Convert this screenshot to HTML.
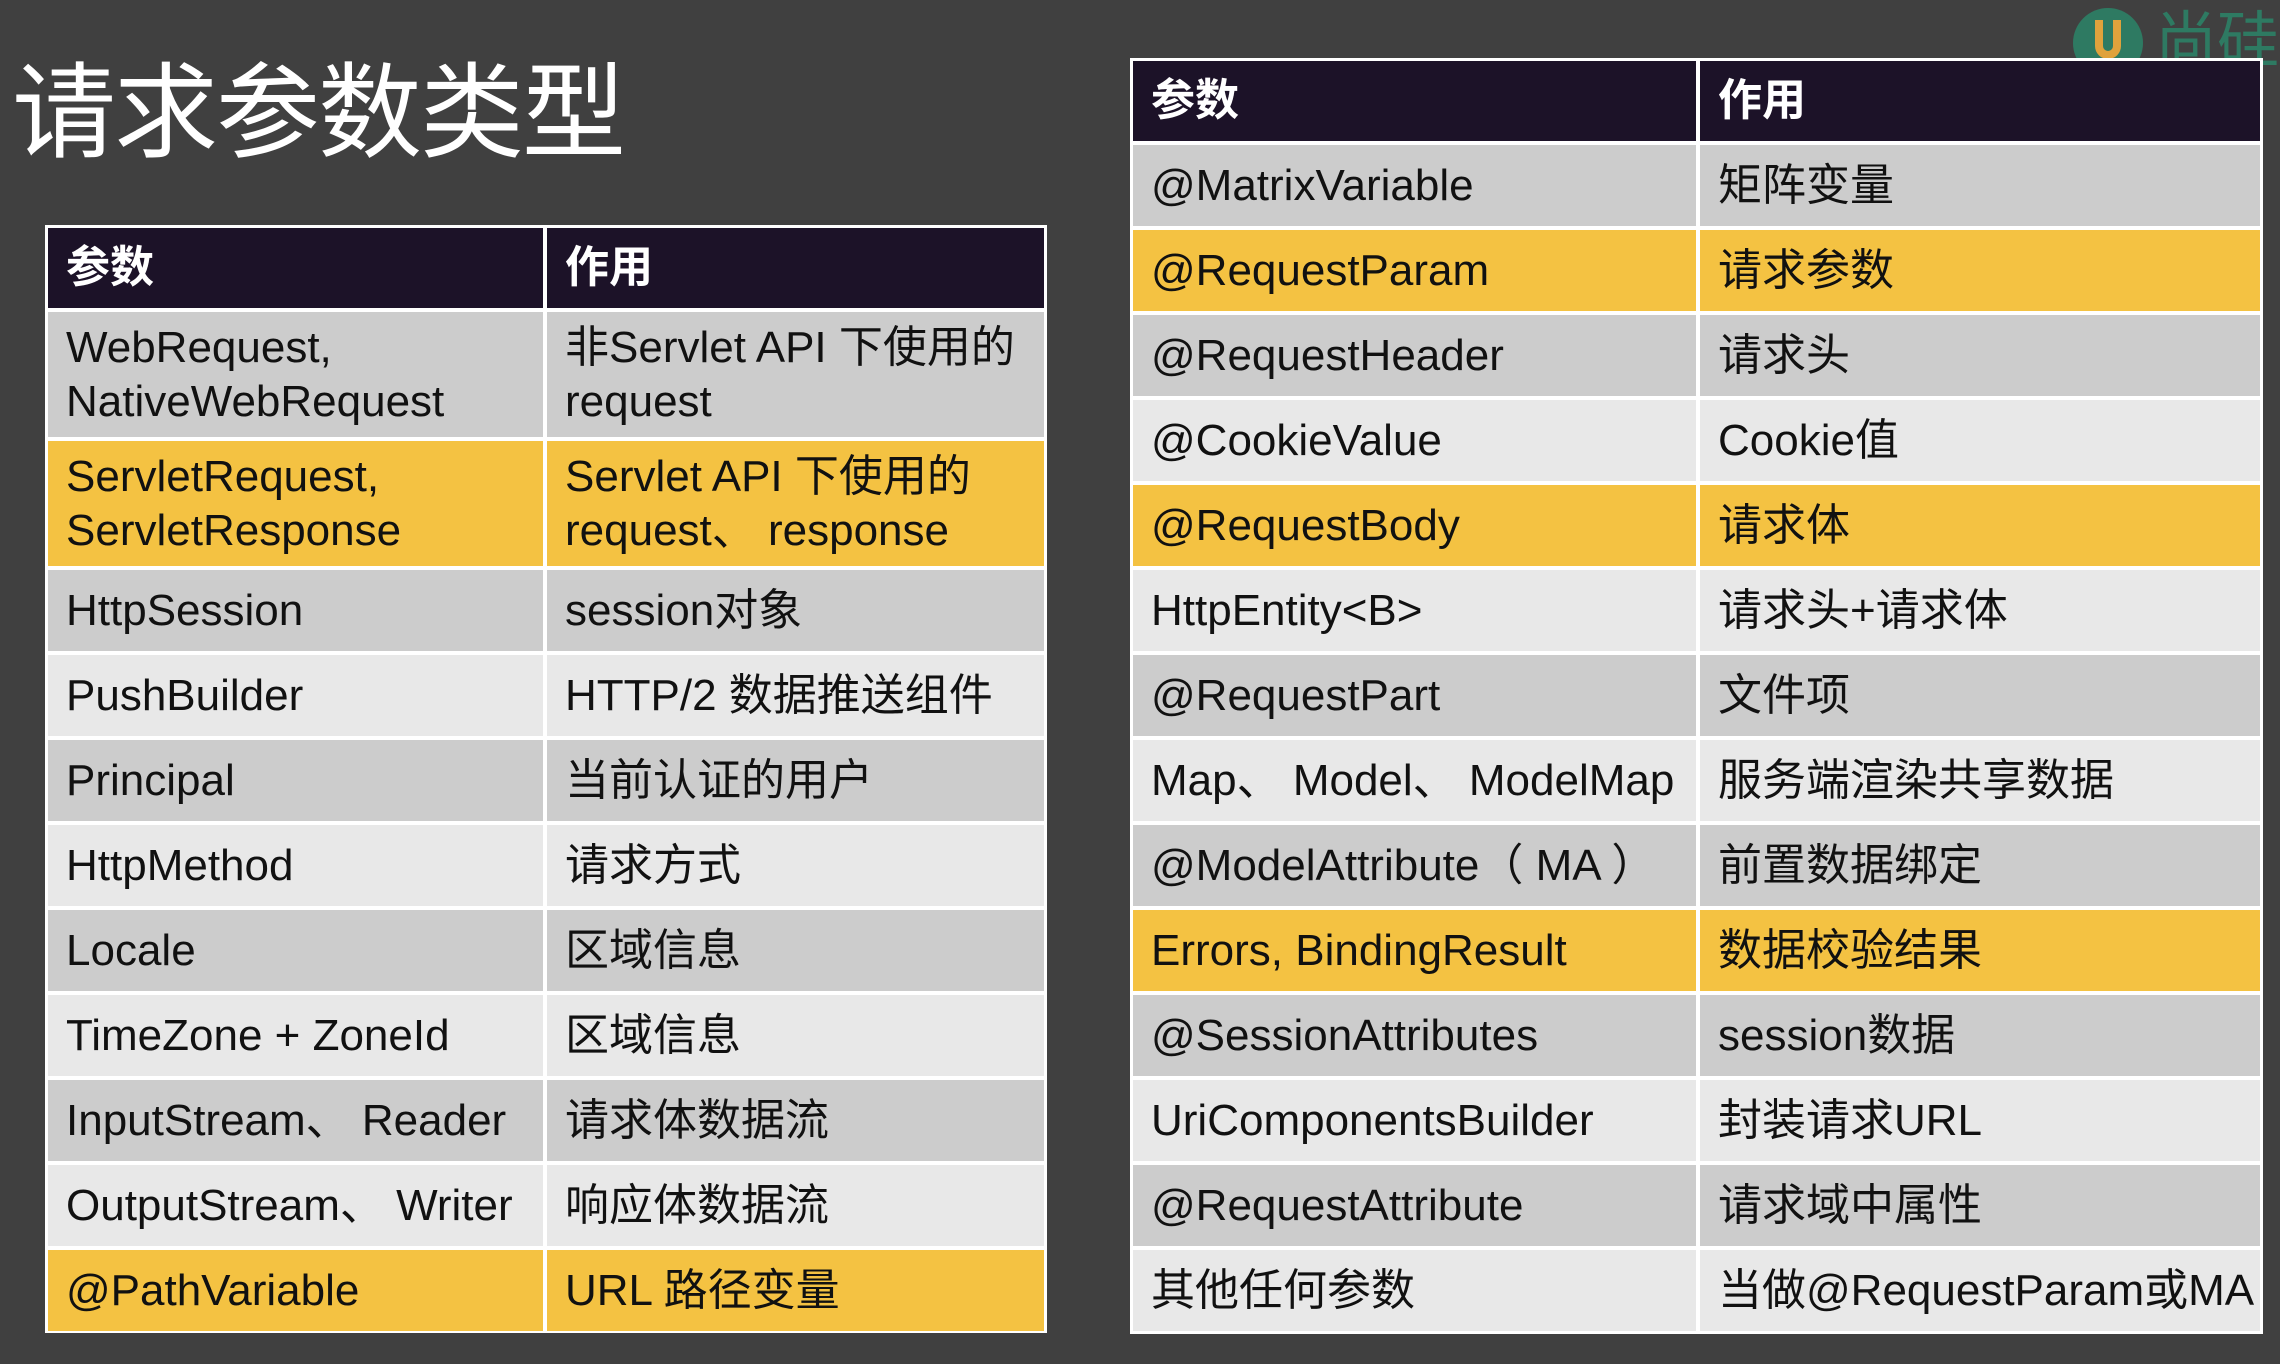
<!DOCTYPE html>
<html><head><meta charset="utf-8"><style>
html,body{margin:0;padding:0}
body{width:2280px;height:1364px;background:#404040;position:relative;overflow:hidden;font-family:"Liberation Sans","Noto Sans CJK SC",sans-serif}
.title{position:absolute;left:12px;top:52px;font-size:104px;color:#fff;letter-spacing:-2px;line-height:124px}
.t{position:absolute;background:#fff;padding:3px;display:grid;gap:4px;box-sizing:border-box}
.t div{display:flex;align-items:center;padding-left:18px;font-size:44px;color:#111;line-height:54px;background:#e8e8e8}
.t .h{background:#1c1228;color:#fff;font-weight:bold;font-size:44px}
.t .d{background:#cccccc}
.t .y{background:#f4c242}
#L{left:45px;top:225px;width:1002px;height:1108px;grid-template-columns:495px 1fr;grid-template-rows:80px 125px 125px repeat(9,81px)}
#R{left:1130px;top:58px;width:1133px;height:1276px;grid-template-columns:563px 1fr;grid-template-rows:80px repeat(14,81px)}
.logo{position:absolute;left:2073px;top:8px}
</style></head><body>
<div class="title">请求参数类型</div>
<div class="logo">
<svg width="210" height="60" viewBox="0 0 210 60"><circle cx="35" cy="35" r="35" fill="#2e7a62"/><path d="M22 12v26a13 13 0 0 0 26 0V12h-8v26a5 5 0 0 1-10 0V12z" fill="#e0a23c"/>
<text x="82" y="54" font-size="62" fill="#2e7a62" font-family="Noto Sans CJK SC,sans-serif">尚硅</text></svg>
</div>
<div class="t" id="L">
<div class="h">参数</div><div class="h">作用</div>
<div class="d">WebRequest,<br>NativeWebRequest</div><div class="d">非Servlet API 下使用的<br>request</div>
<div class="y">ServletRequest,<br>ServletResponse</div><div class="y">Servlet API 下使用的<br>request、 response</div>
<div class="d">HttpSession</div><div class="d">session对象</div>
<div>PushBuilder</div><div>HTTP/2 数据推送组件</div>
<div class="d">Principal</div><div class="d">当前认证的用户</div>
<div>HttpMethod</div><div>请求方式</div>
<div class="d">Locale</div><div class="d">区域信息</div>
<div>TimeZone + ZoneId</div><div>区域信息</div>
<div class="d">InputStream、 Reader</div><div class="d">请求体数据流</div>
<div>OutputStream、 Writer</div><div>响应体数据流</div>
<div class="y">@PathVariable</div><div class="y">URL 路径变量</div>
</div>
<div class="t" id="R">
<div class="h">参数</div><div class="h">作用</div>
<div class="d">@MatrixVariable</div><div class="d">矩阵变量</div>
<div class="y">@RequestParam</div><div class="y">请求参数</div>
<div class="d">@RequestHeader</div><div class="d">请求头</div>
<div>@CookieValue</div><div>Cookie值</div>
<div class="y">@RequestBody</div><div class="y">请求体</div>
<div>HttpEntity&lt;B&gt;</div><div>请求头+请求体</div>
<div class="d">@RequestPart</div><div class="d">文件项</div>
<div>Map、 Model、 ModelMap</div><div>服务端渲染共享数据</div>
<div class="d">@ModelAttribute（ MA ）</div><div class="d">前置数据绑定</div>
<div class="y">Errors, BindingResult</div><div class="y">数据校验结果</div>
<div class="d">@SessionAttributes</div><div class="d">session数据</div>
<div>UriComponentsBuilder</div><div>封装请求URL</div>
<div class="d">@RequestAttribute</div><div class="d">请求域中属性</div>
<div>其他任何参数</div><div>当做@RequestParam或MA</div>
</div>
</body></html>
